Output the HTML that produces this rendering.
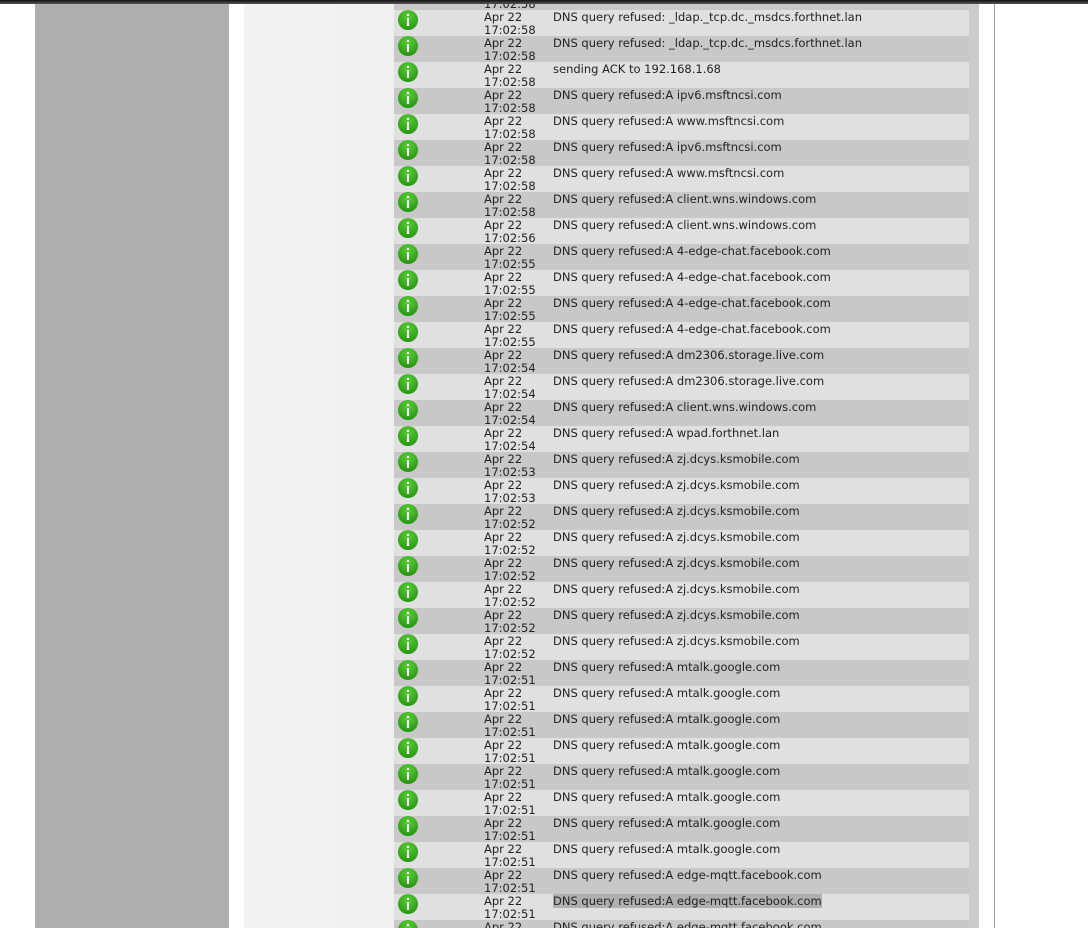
<!DOCTYPE html>
<html><head><style>
*{margin:0;padding:0;box-sizing:border-box}
body{width:1088px;height:928px;overflow:hidden;background:#fff;position:relative;font-family:"DejaVu Sans","Liberation Sans",sans-serif;font-size:11.5px;color:#222}
.top{position:absolute;left:0;top:0;width:1088px;height:4px;background:linear-gradient(#111,#555)}
.lg{position:absolute;left:35px;top:4px;width:194px;height:924px;background:#afafaf}
.panel{position:absolute;left:244px;top:4px;width:735px;height:924px;background:linear-gradient(90deg,#f3f3f3,#e6e6e6)}
.tbl{position:absolute;left:394px;top:4px;width:585px;height:924px;background:#cbcbcb;overflow:hidden}
.line{position:absolute;left:994px;top:4px;width:1px;height:924px;background:#a0a0a0}
.r{position:absolute;left:0;width:575px;height:26px}
.d{background:#c8c8c8}.l{background:#e0e0e0}
.ic{position:absolute;left:4px;top:0;width:20px;height:20px;border-radius:50%;background:radial-gradient(circle at 50% 30%,#5ccf3a,#2a9a14 75%)}
.ic:before{content:"";position:absolute;left:9px;top:4px;width:2px;height:2px;background:#fff}
.ic:after{content:"";position:absolute;left:9px;top:8px;width:2px;height:8px;background:#fff}
.t{position:absolute;left:90px;top:1px;line-height:13px}
.m{position:absolute;left:159px;top:1px;line-height:13px;white-space:nowrap}
.hl{background:#b0b0b0}
</style></head><body>
<div class="top"></div>
<div class="lg"></div>
<div class="panel"></div>
<div class="line"></div>
<div class="tbl" id="t">
<div class="r d" style="top:-20px"><div class="ic" style="top:26px"></div><div class="t">Apr 22<br>17:02:58</div></div>
<div class="r l" style="top:6px"><div class="ic"></div><div class="t">Apr 22<br>17:02:58</div><div class="m">DNS query refused: _ldap._tcp.dc._msdcs.forthnet.lan</div></div>
<div class="r d" style="top:32px"><div class="ic"></div><div class="t">Apr 22<br>17:02:58</div><div class="m">DNS query refused: _ldap._tcp.dc._msdcs.forthnet.lan</div></div>
<div class="r l" style="top:58px"><div class="ic"></div><div class="t">Apr 22<br>17:02:58</div><div class="m">sending ACK to 192.168.1.68</div></div>
<div class="r d" style="top:84px"><div class="ic"></div><div class="t">Apr 22<br>17:02:58</div><div class="m">DNS query refused:A ipv6.msftncsi.com</div></div>
<div class="r l" style="top:110px"><div class="ic"></div><div class="t">Apr 22<br>17:02:58</div><div class="m">DNS query refused:A www.msftncsi.com</div></div>
<div class="r d" style="top:136px"><div class="ic"></div><div class="t">Apr 22<br>17:02:58</div><div class="m">DNS query refused:A ipv6.msftncsi.com</div></div>
<div class="r l" style="top:162px"><div class="ic"></div><div class="t">Apr 22<br>17:02:58</div><div class="m">DNS query refused:A www.msftncsi.com</div></div>
<div class="r d" style="top:188px"><div class="ic"></div><div class="t">Apr 22<br>17:02:58</div><div class="m">DNS query refused:A client.wns.windows.com</div></div>
<div class="r l" style="top:214px"><div class="ic"></div><div class="t">Apr 22<br>17:02:56</div><div class="m">DNS query refused:A client.wns.windows.com</div></div>
<div class="r d" style="top:240px"><div class="ic"></div><div class="t">Apr 22<br>17:02:55</div><div class="m">DNS query refused:A 4-edge-chat.facebook.com</div></div>
<div class="r l" style="top:266px"><div class="ic"></div><div class="t">Apr 22<br>17:02:55</div><div class="m">DNS query refused:A 4-edge-chat.facebook.com</div></div>
<div class="r d" style="top:292px"><div class="ic"></div><div class="t">Apr 22<br>17:02:55</div><div class="m">DNS query refused:A 4-edge-chat.facebook.com</div></div>
<div class="r l" style="top:318px"><div class="ic"></div><div class="t">Apr 22<br>17:02:55</div><div class="m">DNS query refused:A 4-edge-chat.facebook.com</div></div>
<div class="r d" style="top:344px"><div class="ic"></div><div class="t">Apr 22<br>17:02:54</div><div class="m">DNS query refused:A dm2306.storage.live.com</div></div>
<div class="r l" style="top:370px"><div class="ic"></div><div class="t">Apr 22<br>17:02:54</div><div class="m">DNS query refused:A dm2306.storage.live.com</div></div>
<div class="r d" style="top:396px"><div class="ic"></div><div class="t">Apr 22<br>17:02:54</div><div class="m">DNS query refused:A client.wns.windows.com</div></div>
<div class="r l" style="top:422px"><div class="ic"></div><div class="t">Apr 22<br>17:02:54</div><div class="m">DNS query refused:A wpad.forthnet.lan</div></div>
<div class="r d" style="top:448px"><div class="ic"></div><div class="t">Apr 22<br>17:02:53</div><div class="m">DNS query refused:A zj.dcys.ksmobile.com</div></div>
<div class="r l" style="top:474px"><div class="ic"></div><div class="t">Apr 22<br>17:02:53</div><div class="m">DNS query refused:A zj.dcys.ksmobile.com</div></div>
<div class="r d" style="top:500px"><div class="ic"></div><div class="t">Apr 22<br>17:02:52</div><div class="m">DNS query refused:A zj.dcys.ksmobile.com</div></div>
<div class="r l" style="top:526px"><div class="ic"></div><div class="t">Apr 22<br>17:02:52</div><div class="m">DNS query refused:A zj.dcys.ksmobile.com</div></div>
<div class="r d" style="top:552px"><div class="ic"></div><div class="t">Apr 22<br>17:02:52</div><div class="m">DNS query refused:A zj.dcys.ksmobile.com</div></div>
<div class="r l" style="top:578px"><div class="ic"></div><div class="t">Apr 22<br>17:02:52</div><div class="m">DNS query refused:A zj.dcys.ksmobile.com</div></div>
<div class="r d" style="top:604px"><div class="ic"></div><div class="t">Apr 22<br>17:02:52</div><div class="m">DNS query refused:A zj.dcys.ksmobile.com</div></div>
<div class="r l" style="top:630px"><div class="ic"></div><div class="t">Apr 22<br>17:02:52</div><div class="m">DNS query refused:A zj.dcys.ksmobile.com</div></div>
<div class="r d" style="top:656px"><div class="ic"></div><div class="t">Apr 22<br>17:02:51</div><div class="m">DNS query refused:A mtalk.google.com</div></div>
<div class="r l" style="top:682px"><div class="ic"></div><div class="t">Apr 22<br>17:02:51</div><div class="m">DNS query refused:A mtalk.google.com</div></div>
<div class="r d" style="top:708px"><div class="ic"></div><div class="t">Apr 22<br>17:02:51</div><div class="m">DNS query refused:A mtalk.google.com</div></div>
<div class="r l" style="top:734px"><div class="ic"></div><div class="t">Apr 22<br>17:02:51</div><div class="m">DNS query refused:A mtalk.google.com</div></div>
<div class="r d" style="top:760px"><div class="ic"></div><div class="t">Apr 22<br>17:02:51</div><div class="m">DNS query refused:A mtalk.google.com</div></div>
<div class="r l" style="top:786px"><div class="ic"></div><div class="t">Apr 22<br>17:02:51</div><div class="m">DNS query refused:A mtalk.google.com</div></div>
<div class="r d" style="top:812px"><div class="ic"></div><div class="t">Apr 22<br>17:02:51</div><div class="m">DNS query refused:A mtalk.google.com</div></div>
<div class="r l" style="top:838px"><div class="ic"></div><div class="t">Apr 22<br>17:02:51</div><div class="m">DNS query refused:A mtalk.google.com</div></div>
<div class="r d" style="top:864px"><div class="ic"></div><div class="t">Apr 22<br>17:02:51</div><div class="m">DNS query refused:A edge-mqtt.facebook.com</div></div>
<div class="r l" style="top:890px"><div class="ic"></div><div class="t">Apr 22<br>17:02:51</div><div class="m"><span class="hl">DNS query refused:A edge-mqtt.facebook.com</span></div></div>
<div class="r d" style="top:916px"><div class="ic"></div><div class="t">Apr 22<br>17:02:51</div><div class="m">DNS query refused:A edge-mqtt.facebook.com</div></div>
</div>
</body></html>
